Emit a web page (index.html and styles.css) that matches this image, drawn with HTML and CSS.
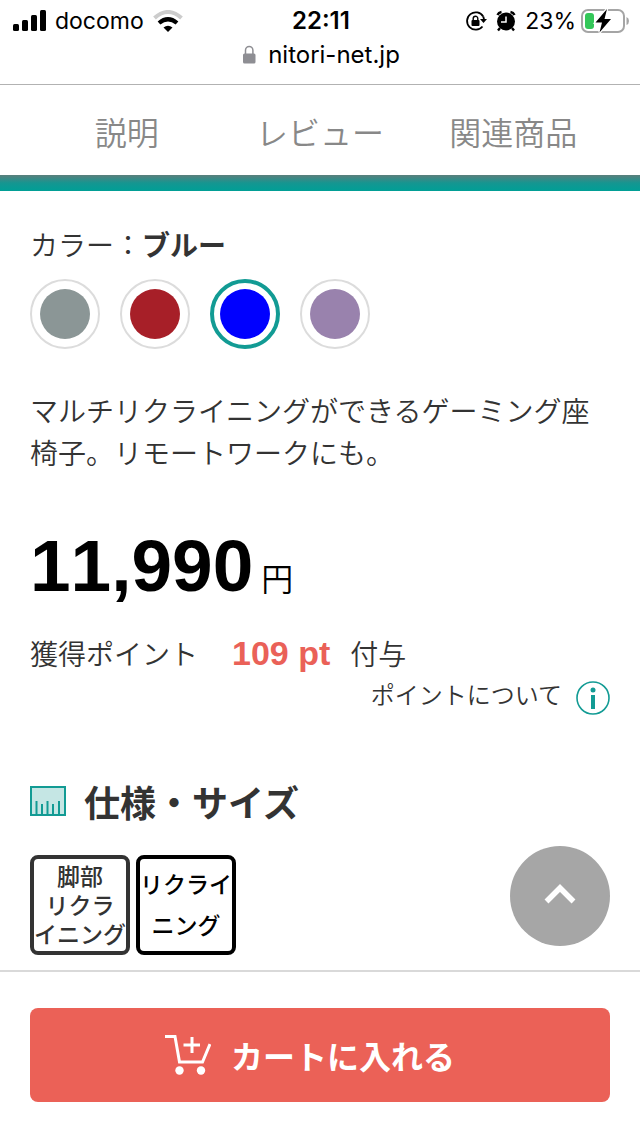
FILE: index.html
```
<!DOCTYPE html>
<html lang="ja">
<head>
<meta charset="utf-8">
<meta name="viewport" content="width=device-width, initial-scale=1">
<title>nitori-net.jp</title>
<link rel="stylesheet" href="styles.css">
</head>
<body>
<header class="browser">
  <div class="status">
    <div class="status-left">
      <svg width="33" height="22" viewBox="0 0 33 22"><rect x="0" y="14" width="6" height="7" rx="1.5"/><rect x="9" y="10" width="6" height="11" rx="1.5"/><rect x="18" y="5" width="6" height="16" rx="1.5"/><rect x="27" y="0" width="6" height="21" rx="1.5"/></svg>
      <span>docomo</span>
      <svg width="30" height="22" viewBox="0 0 30 22"><path d="M1.500 8Q15-4 28.500 8" fill="none" stroke="#ccc" stroke-width="4"/><path d="M6 13Q15 5.500 24 13" fill="none" stroke="#000" stroke-width="4.200"/><path d="M10.500 17.500Q15 14 19.500 17.500L15 22Z"/></svg>
    </div>
    <time class="clock">22:11</time>
    <div class="status-right">
      <svg width="22" height="22" viewBox="0 0 22 22"><path d="M18.200 6.500A8.700 8.700 0 1 0 17.500 16.500" fill="none" stroke="#000" stroke-width="1.800"/><path d="M18.200 6.500A8.700 8.700 0 0 1 19 10" fill="none" stroke="#000" stroke-width="1.800"/><path d="M15 9h7l-3.500 4z"/><rect x="6.500" y="10" width="8" height="6" rx="1"/><path d="M8.200 10.500V8.500a2.300 2.300 0 0 1 4.600 0v2" fill="none" stroke="#000" stroke-width="1.400"/></svg>
      <svg width="20" height="22" viewBox="0 0 20 22"><circle cx="10" cy="11.500" r="9"/><path d="M1.500 5Q2.500 2.500 5.500 2M18.500 5Q17.500 2.500 14.500 2M4 18l-2 2.500M16 18l2 2.500" fill="none" stroke="#000" stroke-width="2.400"/><path d="M10 6.500v5.500H5" fill="none" stroke="#fff" stroke-width="1.500"/></svg>
      <span>23%</span>
      <svg class="battery" width="48" height="24" viewBox="0 0 48 24"><rect x="1" y="1" width="42" height="22" rx="6" fill="#fff" stroke="#a5a5a5" stroke-width="2"/><rect x="4" y="4" width="9" height="16" rx="3" fill="#34c759"/><path d="M45.500 8q2.500 1 2.500 4t-2.500 4z" fill="#a5a5a5"/><path d="M26 0L14.500 13.500h6.500l-2.500 10L30 10h-6.500z" stroke="#fff" stroke-width="2.500"/><path d="M26 0L14.500 13.500h6.500l-2.500 10L30 10h-6.500z"/></svg>
    </div>
  </div>
  <div class="address">
    <svg width="14" height="20" viewBox="0 0 14 20"><rect x="1" y="8.500" width="12.500" height="10" rx="1.500" fill="#8e8e93"/><path d="M3.500 9V5.200a3.700 3.700 0 0 1 7.400 0V9" fill="none" stroke="#8e8e93" stroke-width="1.500"/></svg>
    <span>nitori-net.jp</span>
  </div>
</header>
<nav class="tabs">
  <a href="#description">説明</a>
  <a href="#review">レビュー</a>
  <a href="#related">関連商品</a>
</nav>
<main class="product">
  <fieldset class="colors">
    <legend>カラー：<strong>ブルー</strong></legend>
    <div class="swatches">
      <input class="swatch gray" type="radio" name="color" aria-label="グレー">
      <input class="swatch red" type="radio" name="color" aria-label="レッド">
      <input class="swatch blue" type="radio" name="color" aria-label="ブルー" checked>
      <input class="swatch purple" type="radio" name="color" aria-label="パープル">
    </div>
  </fieldset>
  <p class="summary" id="description">マルチリクライニングができるゲーミング座椅子。リモートワークにも。</p>
  <p class="price"><strong>11,990</strong><span>円</span></p>
  <p class="points"><span>獲得ポイント</span><strong>109 pt</strong><span>付与</span></p>
  <a class="about" href="#points"><span>ポイントについて</span>
    <svg width="34" height="34" viewBox="0 0 34 34"><circle cx="17" cy="17" r="16" fill="none" stroke="#129b94" stroke-width="1.600"/><circle cx="17" cy="9" r="2.500" fill="#129b94"/><path d="M15 14h4v14h-4z" fill="#129b94"/></svg>
  </a>
  <h2 class="spec-title">
    <svg width="36" height="30" viewBox="0 0 36 30"><rect x="1" y="1" width="34" height="28" fill="#c5e6e4" stroke="#129b94" stroke-width="2"/><path d="M6.500 29V15M12 29V18M17.500 29V15M23 29V18M29 29V15" stroke="#129b94" stroke-width="2"/></svg>
    <span>仕様・サイズ</span>
  </h2>
  <ul class="features">
    <li class="feature three">脚部<br>リクラ<br>イニング</li>
    <li class="feature two">リクライ<br>ニング</li>
  </ul>
</main>
<button class="to-top" type="button" aria-label="ページの先頭へ">
  <svg width="32" height="24" viewBox="0 0 32 24"><path d="M2.500 17.500L16 4L29.500 17.500" fill="none" stroke="#fff" stroke-width="5.500"/></svg>
</button>
<div class="buy">
  <button class="cart" type="button">
    <svg width="46" height="40" viewBox="0 0 46 40"><path d="M0 1.500H10L14.500 27H37.500L45 9" fill="none" stroke="#fff" stroke-width="3"/><path d="M27 2v16M18.500 10H35" stroke="#fff" stroke-width="3"/><circle cx="14.500" cy="35.500" r="4.200" fill="#fff"/><circle cx="36" cy="35.500" r="4.200" fill="#fff"/></svg>
    <span>カートに入れる</span>
  </button>
</div>
</body>
</html>
```
FILE: styles.css
```
* { box-sizing: border-box; }
body {
  margin: 0;
  min-height: 100vh;
  display: flex;
  flex-direction: column;
  background: #fff;
  color: #333;
  font-family: "Noto Sans CJK JP", sans-serif;
  font-weight: 350;
  font-size: 28px;
  line-height: 42px;
}
a { color: inherit; text-decoration: none; }
p, h2, ul { margin: 0; padding: 0; }
strong { font-weight: 700; }
svg { display: block; flex: none; }
button { border: 0; padding: 0; font: inherit; cursor: pointer; }

.browser {
  padding: 4px 11px 12px 13px;
  border-bottom: 1px solid #b2b2b2;
  color: #000;
  font-family: Inter, sans-serif;
  font-weight: 400;
  font-size: 24px;
  line-height: 34px;
}
.status {
  display: grid;
  grid-template-columns: 1fr auto 1fr;
  align-items: center;
  font-size: 23px;
}
.status-left, .status-right { display: flex; align-items: center; }
.status-left { gap: 9px; }
.status-right { justify-content: flex-end; gap: 9px; }
.battery { margin-left: -4px; }
.clock { font-size: 24px; font-weight: 600; }
.address {
  display: flex;
  justify-content: center;
  align-items: center;
  gap: 12px;
}

.tabs {
  display: grid;
  grid-template-columns: repeat(3, 1fr);
  padding: 22px 30px 20px;
  color: #888;
  font-size: 32px;
  line-height: 48px;
  text-align: center;
}

.product {
  padding: 48px 30px 15px;
  background: linear-gradient(#5a7f7c, #159691 50%, #009f96) top / 100% 16px no-repeat;
}
.colors { margin: 0; padding: 0; border: 0; }
.colors legend { padding: 0; }
.swatches { display: flex; gap: 20px; margin-top: 14px; }
.swatch {
  appearance: none;
  width: 70px;
  height: 70px;
  margin: 0;
  padding: 8px;
  border: 2px solid #dcdcdc;
  border-radius: 50%;
  background-clip: content-box;
}
.swatch:checked { border: 4px solid #129b94; padding: 6px; }
.gray { background-color: #8b9696; }
.red { background-color: #a71f28; }
.blue { background-color: #00f; }
.purple { background-color: #9982ad; }

.summary { margin-top: 40px; }
.price {
  display: flex;
  align-items: baseline;
  gap: 8px;
  margin-top: 48px;
  color: #000;
  font-size: 32px;
  line-height: 90px;
}
.price strong {
  font-family: "Liberation Sans", sans-serif;
  font-size: 73px;
  font-kerning: none;
}
.points {
  display: flex;
  align-items: baseline;
  margin-top: 10px;
}
.points strong {
  margin: 0 20px 0 34px;
  color: #ea6158;
  font-family: "Liberation Sans", sans-serif;
  font-size: 34px;
  font-kerning: none;
}
.about {
  display: flex;
  justify-content: flex-end;
  gap: 14px;
  margin-top: 3px;
  font-size: 24px;
  line-height: 34px;
}
.about svg { margin-top: 4px; }
.spec-title {
  display: flex;
  align-items: center;
  gap: 18px;
  margin-top: 59px;
  font-size: 36px;
  line-height: 54px;
}
.features { display: flex; gap: 6px; margin-top: 27px; list-style: none; }
.feature {
  width: 100px;
  height: 100px;
  border: 4px solid currentColor;
  border-radius: 8px;
  font-family: "Liberation Sans", "Noto Sans CJK JP", sans-serif;
  font-size: 23px;
  font-weight: 500;
  text-align: center;
  white-space: nowrap;
}
.three { padding-top: 4px; line-height: 29px; }
.two { padding-top: 6px; line-height: 41px; color: #000; }

.to-top {
  position: fixed;
  right: 30px;
  bottom: 190px;
  display: grid;
  place-items: center;
  width: 100px;
  height: 100px;
  border-radius: 50%;
  background: #a6a6a6;
}
.buy {
  position: sticky;
  bottom: 0;
  margin-top: auto;
  padding: 36px 30px 34px;
  border-top: 2px solid #d9d9d9;
  background: #fff;
}
.cart {
  display: flex;
  justify-content: center;
  align-items: center;
  gap: 20px;
  width: 100%;
  padding: 23px 20px 23px 0;
  border-radius: 8px;
  background: #eb6157;
  color: #fff;
  font-size: 32px;
  font-weight: 700;
  line-height: 48px;
}
```
